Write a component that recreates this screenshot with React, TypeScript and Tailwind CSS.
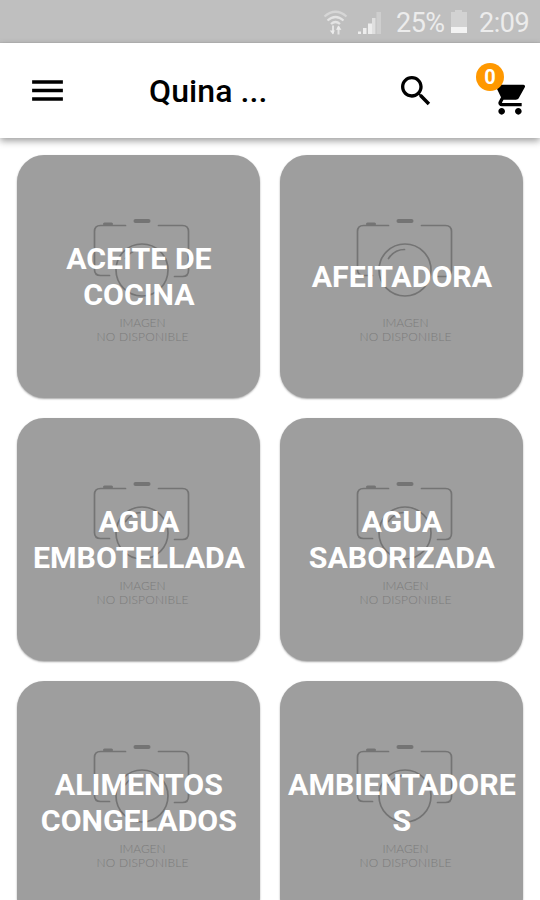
import React from "react";

const categories: string[][] = [
  ["ACEITE DE", "COCINA"],
  ["AFEITADORA"],
  ["AGUA", "EMBOTELLADA"],
  ["AGUA", "SABORIZADA"],
  ["ALIMENTOS", "CONGELADOS"],
  ["AMBIENTADORE", "S"],
];

function StatusBar() {
  return (
    <div className="flex h-[43px] shrink-0 items-center border-b border-[#b8b8b8] bg-[#bfbfbf] pl-[323px] pt-[5px] text-[27px] leading-none tracking-[-0.5px] text-[#ececec]">
      <svg width="25" height="26" viewBox="0 0 25 26" fill="none" stroke="#e4e4e4" strokeWidth="2.2" className="mb-[2px] shrink-0">
        <path d="M1.5 6.5 Q12.5 -3 23.5 6.5" stroke="#d6d6d6" />
        <path d="M4.5 10.5 Q12.5 3.5 20.5 10.5" />
        <path d="M8 14 Q12.5 10 17 14" />
        <path d="M10 15.5v8M15.5 24.5v-8" strokeWidth="2" />
        <path d="M6.8 20.5h5L10 24.5zM13 19.8h5.4L15.5 15.5z" fill="#ececec" stroke="none" />
      </svg>
      <svg width="25" height="24" viewBox="0 0 25 24" className="mb-px ml-[9px] shrink-0">
        <path d="M1 20.5h3V23H1zM6 17h3.5v6H6zM11 12.5h4V23h-4z" fill="#ededed" />
        <path d="M15 7h3.5v16H15z" fill="#dfdfdf" />
        <path d="M19.5 1H24v22h-4.5z" fill="#cecece" />
      </svg>
      <span className="ml-[14px] w-[49px] shrink-0 whitespace-nowrap">25%</span>
      <svg width="18" height="26" viewBox="0 0 18 26" className="mb-[3px] ml-[5px] shrink-0">
        <path d="M5 1h7v2h5v15H1V3h4z" fill="#d2d2d2" />
        <path d="M1 18h16v6H1z" fill="#f3f3f3" />
      </svg>
      <span className="ml-[11px] whitespace-nowrap">2:09</span>
    </div>
  );
}

function AppBar() {
  return (
    <header className="relative z-10 flex h-[95px] shrink-0 items-center bg-white pl-[27px] text-black shadow-[0_3px_7px_rgba(0,0,0,0.38)]">
      <svg width="41" height="41" viewBox="0 0 24 24" className="shrink-0">
        <path d="M3 18h18v-2H3v2zm0-5h18v-2H3v2zm0-7v2h18V6H3z" />
      </svg>
      <h1 className="ml-[81px] w-[246px] text-[32px] font-medium leading-none tracking-[0.1px]">Quina ...</h1>
      <svg width="40" height="40" viewBox="0 0 24 24" className="ml-px shrink-0">
        <path d="M15.5 14h-.79l-.28-.27C15.41 12.59 16 11.11 16 9.5 16 5.91 13.09 3 9.5 3S3 5.91 3 9.5 5.91 16 9.5 16c1.61 0 3.09-.59 4.23-1.57l.27.28v.79l5 4.99L20.49 19l-4.99-5zm-6 0C7.01 14 5 11.99 5 9.5S7.01 5 9.5 5 14 7.01 14 9.5 11.99 14 9.5 14z" />
      </svg>
      <div className="relative ml-[54px] mt-[15px] shrink-0">
        <svg width="40" height="40" viewBox="0 0 24 24">
          <path d="M7 18c-1.1 0-1.99.9-1.99 2S5.9 22 7 22s2-.9 2-2-.9-2-2-2zM1 2v2h2l3.6 7.59-1.35 2.45c-.16.28-.25.61-.25.96 0 1.1.9 2 2 2h12v-2H7.42c-.14 0-.25-.11-.25-.25l.03-.12.9-1.63h7.45c.75 0 1.41-.41 1.75-1.03l3.58-6.49A1.003 1.003 0 0 0 20 4H5.21l-.94-2H1zm16 16c-1.1 0-1.99.9-1.99 2s.89 2 1.99 2 2-.9 2-2-.9-2-2-2z" />
        </svg>
        <span className="absolute -left-[14px] -top-[15px] flex size-[28px] items-center justify-center rounded-full bg-[#ff9800] text-[20px] font-bold leading-none text-white">
          0
        </span>
      </div>
    </header>
  );
}

function MissingImage() {
  return (
    <svg viewBox="-0.5 -0.5 243 243" className="absolute inset-0 size-full" fill="none" stroke="#747474" strokeWidth="1.7" strokeLinecap="round">
      <path d="M108 70H83Q77 70 77 76V114Q77 120 83 120H92" />
      <path d="M141 70H165Q171 70 171 76V115Q171 121 165 121H157" />
      <path d="M87 68.5H94" strokeWidth="3" />
      <path d="M118 65.5H131" strokeWidth="4" />
      <circle cx="124.5" cy="114.5" r="26" />
      <path d="M108 103Q114 94 124 94" />
      <g fill="#7b7b7b" stroke="none" className="font-[Lato] font-light">
        <text x="102" y="171.5" fontSize="12" textLength="46">IMAGEN</text>
        <text x="79" y="185" fontSize="12" textLength="92">NO DISPONIBLE</text>
      </g>
    </svg>
  );
}

function CategoryCard({ lines }: { lines: string[] }) {
  return (
    <div className="relative flex h-[243px] items-center justify-center overflow-hidden rounded-[27px] bg-[#9e9e9e] shadow-[0_1px_2px_rgba(0,0,0,0.35)]">
      <MissingImage />
      <p className="relative pt-px text-center text-[30.3px] font-bold leading-[36px] text-white">
        {lines.map((line) => (
          <span key={line} className="block whitespace-nowrap">{line}</span>
        ))}
      </p>
    </div>
  );
}

export default function App() {
  return (
    <div className="flex h-[900px] w-[540px] flex-col overflow-hidden bg-white font-[Roboto,sans-serif]">
      <StatusBar />
      <AppBar />
      <main className="grid shrink-0 grid-cols-[243px_243px] gap-x-[20px] gap-y-[20.2px] pl-[17.4px] pt-[16.8px]">
        {categories.map((lines) => (
          <CategoryCard key={lines.join(" ")} lines={lines} />
        ))}
      </main>
    </div>
  );
}
